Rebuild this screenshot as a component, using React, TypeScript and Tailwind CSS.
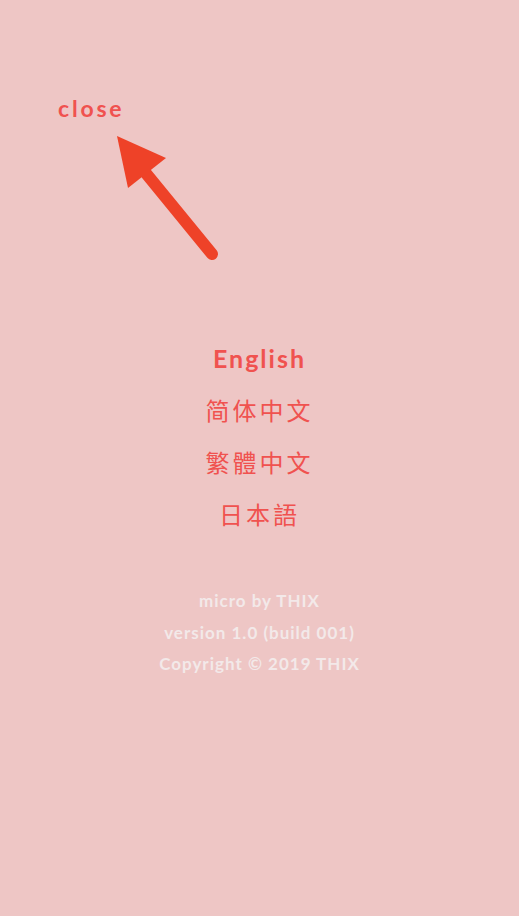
import React from 'react';

const languages = [
  { label: 'English', bold: true },
  { label: '简体中文', bold: false },
  { label: '繁體中文', bold: false },
  { label: '日本語', bold: false },
];

const footer = ['micro by THIX', 'version 1.0 (build 001)', 'Copyright © 2019 THIX'];

export default function App() {
  return (
    <div
      className="min-h-[916px] w-full bg-[#eec6c5] flex flex-col"
      style={{ fontFamily: 'Lato, "Noto Sans CJK SC", "Noto Sans CJK JP", sans-serif' }}
    >
      {/* Close */}
      <div className="pt-[93px] pl-[58px]">
        <button className="text-[23px] leading-[30px] font-bold tracking-[2.8px] text-[#f0524f]">close</button>
      </div>

      {/* Arrow pointing to close */}
      <svg width="110" height="132" viewBox="0 0 110 132" className="ml-[110px] mt-[7px]">
        <path d="M102 124 L30 36" stroke="#ee4228" strokeWidth="12" strokeLinecap="round" fill="none" />
        <path d="M7 6 L56 28 L18 58 Z" fill="#ee4228" />
      </svg>

      {/* Languages */}
      <div className="mt-[71px] flex flex-col items-center">
        {languages.map((lang) => (
          <button
            key={lang.label}
            className={
              lang.bold
                ? 'h-[52px] text-[25px] font-bold tracking-[2px] text-[#f0524f]'
                : 'h-[52px] text-[24px] font-normal tracking-[3px] text-[#f0524f]'
            }
          >
            {lang.label}
          </button>
        ))}
      </div>

      {/* Footer */}
      <div className="mt-[44px] flex flex-col items-center text-[17px] leading-[31.5px] font-bold tracking-[1px] text-[#f3e9e9]">
        {footer.map((line) => (
          <p key={line}>{line}</p>
        ))}
      </div>
    </div>
  );
}
